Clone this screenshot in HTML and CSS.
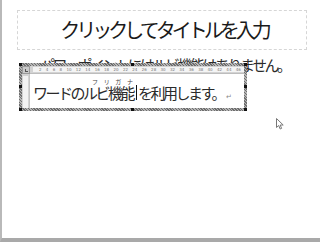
FILE: index.html
```html
<!DOCTYPE html>
<html lang="ja">
<head>
<meta charset="utf-8">
<link rel="stylesheet" href="styles.css">
</head>
<body>
<div class="slide">
  <div class="title-box"><span class="title">クリックしてタイトルを入力</span></div>
  <p class="body-text">パワーポイントにはルビ機能はありません。</p>

  <div class="ole">
    <div class="ole-inner">
      <div class="tab-sel"><span class="tab-l"></span></div>
      <div class="hruler">
        <div class="hband">
          <span>2</span><span>4</span><span>6</span><span>8</span><span>10</span><span>12</span><span>14</span><span>16</span><span>18</span><span>20</span><span>22</span><span>24</span><span>26</span><span>28</span><span>30</span><span>32</span><span>34</span><span>36</span><span>38</span><span>40</span><span>42</span><span>44</span><span>46</span>
        </div>
      </div>
      <div class="vruler"><div class="vband"></div></div>
      <div class="doc">
        <div class="line">ワードのルビ<span class="ruby"><span class="rt"><span>フ</span><span>リ</span><span>ガ</span><span>ナ</span></span><span class="rb">機能</span></span><span class="caret"></span>を利用します。<span class="para">↵</span></div>
      </div>
    </div>
    <span class="h h-tl"></span><span class="h h-tm"></span><span class="h h-tr"></span>
    <span class="h h-ml"></span><span class="h h-mr"></span>
    <span class="h h-bl"></span><span class="h h-bm"></span><span class="h h-br"></span>
  </div>

  <svg class="pointer" width="8" height="12" viewBox="0 0 8 12">
    <path d="M0.5 0.5 L0.5 9.5 L2.7 7.5 L4.2 11 L5.6 10.4 L4.2 7 L7.2 7 Z" fill="#fff" stroke="#777" stroke-width="1"/>
  </svg>
</div>
</body>
</html>
```

FILE: styles.css
```css
* { box-sizing: border-box; }
html, body {
  margin: 0;
  padding: 0;
  width: 320px;
  height: 242px;
  overflow: hidden;
  background: #fff;
}
body {
  font-family: "Noto Sans CJK JP", "Noto Sans", sans-serif;
}
.slide {
  position: relative;
  width: 320px;
  height: 242px;
  background: #fff;
  border-left: 2px solid #b9b9b9;
  border-bottom: 4px solid #a9a9a9;
  padding-top: 10px;
}
.title-box {
  margin-left: 15px;
  width: 290px;
  height: 40px;
  border: 1px dashed #d6d6d6;
  display: flex;
  align-items: center;
  justify-content: center;
}
.title {
  font-size: 20px;
  letter-spacing: -4px;
  color: #1a1a1a;
  line-height: 22px;
  padding-left: 4px;
  padding-bottom: 1px;
}
.body-text {
  margin: 7px 0 0 38px;
  font-size: 15px;
  line-height: 15px;
  letter-spacing: -2.5px;
  color: #2a2a2a;
}
.ole {
  position: absolute;
  left: 17px;
  top: 63px;
  width: 228px;
  height: 48px;
  padding: 3px;
  background: repeating-linear-gradient(45deg, #6e6e6e 0 1px, #b5b5b5 1px 2px);
}
.ole-inner {
  width: 100%;
  height: 100%;
  display: grid;
  grid-template-columns: 8px 1fr;
  grid-template-rows: 8px 1fr;
  background: #fff;
}
.tab-sel {
  background: #c9c9c9;
  border: 1px solid #9a9a9a;
  display: flex;
  align-items: center;
  justify-content: center;
}
.tab-l {
  width: 3px;
  height: 3px;
  border-left: 1px solid #555;
  border-bottom: 1px solid #555;
}
.hruler {
  background: #d3d3d3;
  padding: 1px 0 1px 3px;
  border-bottom: 1px solid #bdbdbd;
}
.hband {
  height: 100%;
  background: #f4f4f4;
  display: flex;
  justify-content: space-between;
  align-items: center;
  padding: 0 3px 0 6px;
  font-family: "DejaVu Sans", sans-serif;
  font-size: 4px;
  line-height: 4px;
  color: #777;
}
.vruler {
  background: #d3d3d3;
  padding: 2px 1px 0 1px;
  border-right: 1px solid #c4c4c4;
}
.vband {
  height: 100%;
  background: #f2f2f2;
}
.doc {
  padding: 4px 0 0 3px;
}
.line {
  font-size: 15px;
  line-height: 14px;
  letter-spacing: -2.5px;
  color: #2a2a2a;
  white-space: nowrap;
  display: flex;
  align-items: flex-end;
}
.ruby {
  display: inline-flex;
  flex-direction: column;
  align-items: stretch;
}
.rt {
  display: flex;
  justify-content: space-between;
  margin: 0 0 1px -16px;
  font-size: 6px;
  line-height: 7px;
  letter-spacing: 0;
  color: #444;
}
.rb {
  display: block;
}
.caret {
  width: 1px;
  height: 15px;
  background: #111;
  margin: 0 1px 0 3px;
  align-self: flex-end;
}
.para {
  font-size: 7px;
  line-height: 8px;
  color: #888;
  letter-spacing: 0;
  margin-left: 2px;
}
.h {
  position: absolute;
  width: 3px;
  height: 3px;
  background: #111;
}
.h-tl { left: 0; top: 0; }
.h-tm { left: 112px; top: 0; }
.h-tr { right: 0; top: 0; }
.h-ml { left: 0; top: 22px; }
.h-mr { right: 0; top: 22px; }
.h-bl { left: 0; bottom: 0; }
.h-bm { left: 112px; bottom: 0; }
.h-br { right: 0; bottom: 0; }
.pointer {
  position: absolute;
  left: 274px;
  top: 118px;
}
```
